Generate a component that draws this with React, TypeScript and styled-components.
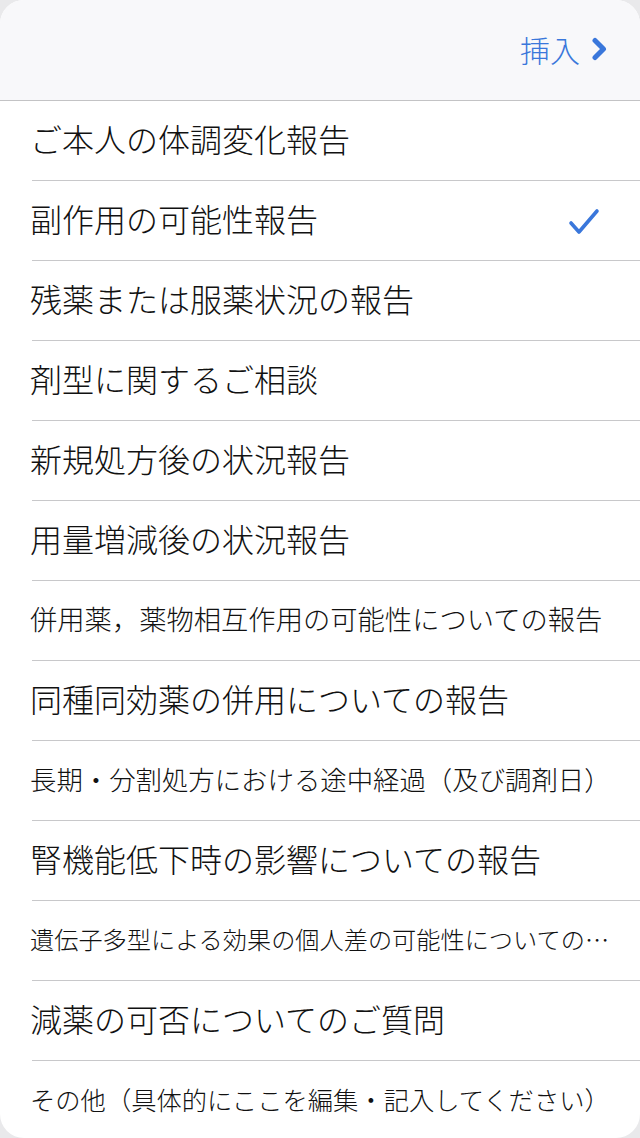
import React from "react";
import styled, { createGlobalStyle } from "styled-components";

const GlobalStyle = createGlobalStyle`
  html, body {
    margin: 0;
    padding: 0;
    background: #e9e9eb;
  }
  * {
    box-sizing: border-box;
  }
`;

const BLUE = "#3a77db";

const Sheet = styled.div`
  width: 640px;
  height: 1138px;
  background: #ffffff;
  border-radius: 24px;
  overflow: hidden;
  display: flex;
  flex-direction: column;
  font-family: "Noto Sans CJK JP", "Noto Sans", sans-serif;
`;

const Header = styled.div`
  height: 101px;
  flex-shrink: 0;
  background: #f8f8fa;
  border-bottom: 1px solid #c3c3c5;
  display: flex;
  align-items: center;
  justify-content: flex-end;
  padding: 0 32px 2px 0;
`;

const InsertButton = styled.button`
  border: none;
  background: none;
  padding: 0;
  display: flex;
  align-items: center;
  gap: 11px;
  color: ${BLUE};
  font-family: inherit;
  font-size: 30px;
  font-weight: 300;
  line-height: 1;
  cursor: pointer;
`;

const List = styled.ul`
  list-style: none;
  margin: 0;
  padding: 0 0 0 32px;
  flex: 1;
`;

const Row = styled.li<{ $last?: boolean }>`
  height: 80px;
  display: flex;
  align-items: center;
  padding: 0 20px 5px 0;
  border-bottom: ${({ $last }) => ($last ? "none" : "1px solid #c8c8ca")};
`;

const Label = styled.span<{ $size: number }>`
  flex: 1;
  min-width: 0;
  font-size: ${({ $size }) => $size}px;
  font-weight: 300;
  color: #111111;
  white-space: nowrap;
  overflow: hidden;
  text-overflow: ellipsis;
  margin-left: -2px;
`;

const Check = styled.svg`
  width: 32px;
  height: 28px;
  flex-shrink: 0;
  margin: 5px 20px 0 12px;
`;

const Chevron = styled.svg`
  width: 17px;
  height: 24px;
`;

type Item = { label: string; size: number; checked?: boolean };

const items: Item[] = [
  { label: "ご本人の体調変化報告", size: 32 },
  { label: "副作用の可能性報告", size: 32, checked: true },
  { label: "残薬または服薬状況の報告", size: 32 },
  { label: "剤型に関するご相談", size: 32 },
  { label: "新規処方後の状況報告", size: 32 },
  { label: "用量増減後の状況報告", size: 32 },
  { label: "併用薬，薬物相互作用の可能性についての報告", size: 27.3 },
  { label: "同種同効薬の併用についての報告", size: 32 },
  { label: "長期・分割処方における途中経過（及び調剤日）", size: 26.4 },
  { label: "腎機能低下時の影響についての報告", size: 32 },
  { label: "遺伝子多型による効果の個人差の可能性についての報告", size: 24.2 },
  { label: "減薬の可否についてのご質問", size: 32 },
  { label: "その他（具体的にここを編集・記入してください）", size: 25.3 },
];

export default function App() {
  return (
    <>
      <GlobalStyle />
      <Sheet>
        <Header>
          <InsertButton>
            挿入
            <Chevron viewBox="0 0 17 24">
              <path
                d="M4 3.5 L12.5 12 L4 20.5"
                fill="none"
                stroke={BLUE}
                strokeWidth="5"
                strokeLinecap="round"
                strokeLinejoin="round"
              />
            </Chevron>
          </InsertButton>
        </Header>
        <List>
          {items.map((item, i) => (
            <Row key={item.label} $last={i === items.length - 1}>
              <Label $size={item.size}>{item.label}</Label>
              {item.checked && (
                <Check viewBox="0 0 32 28">
                  <path
                    d="M3 16 L11 25 L29 4"
                    fill="none"
                    stroke={BLUE}
                    strokeWidth="3.6"
                    strokeLinecap="round"
                    strokeLinejoin="round"
                  />
                </Check>
              )}
            </Row>
          ))}
        </List>
      </Sheet>
    </>
  );
}
